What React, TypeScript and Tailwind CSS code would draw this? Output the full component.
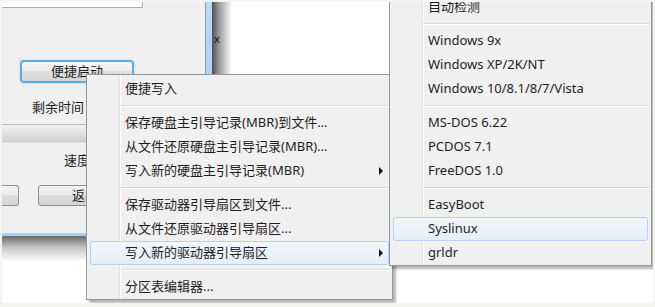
import React from 'react';

type Entry = { label?: string; sub?: boolean; hot?: boolean; sep?: boolean };

const bootMenu: Entry[] = [
  { label: '便捷写入' },
  { sep: true },
  { label: '保存硬盘主引导记录(MBR)到文件...' },
  { label: '从文件还原硬盘主引导记录(MBR)...' },
  { label: '写入新的硬盘主引导记录(MBR)', sub: true },
  { sep: true },
  { label: '保存驱动器引导扇区到文件...' },
  { label: '从文件还原驱动器引导扇区...' },
  { label: '写入新的驱动器引导扇区', sub: true, hot: true },
  { sep: true },
  { label: '分区表编辑器...' },
];

const sectorMenu: Entry[] = [
  { label: '自动检测' },
  { sep: true },
  { label: 'Windows 9x' },
  { label: 'Windows XP/2K/NT' },
  { label: 'Windows 10/8.1/8/7/Vista' },
  { sep: true },
  { label: 'MS-DOS 6.22' },
  { label: 'PCDOS 7.1' },
  { label: 'FreeDOS 1.0' },
  { sep: true },
  { label: 'EasyBoot' },
  { label: 'Syslinux', hot: true },
  { label: 'grldr' },
];

function Arrow() {
  return <span className="ml-auto h-0 w-0 border-y-[4px] border-l-[4px] border-y-transparent border-l-[#111]" />;
}

function PopupMenu({ entries, className }: { entries: Entry[]; className: string }) {
  return (
    <div
      className={`absolute flex flex-col border border-[#979797] bg-[#f0f0f0] bg-[linear-gradient(to_right,transparent_32px,#e2e3e3_32px,#e2e3e3_33px,#ffffff_33px,#ffffff_34px,transparent_34px)] pt-[2px] shadow-[3px_3px_2px_rgba(0,0,0,0.28)] ${className}`}
    >
      {entries.map((e, i) => {
        if (e.sep) {
          return (
            <div key={i} className="flex h-[10px] flex-col justify-center pl-[33px] pr-[2px]">
              <div className="h-px bg-[#dcdcdc]" />
              <div className="h-px bg-white" />
            </div>
          );
        }
        if (e.hot) {
          return (
            <div
              key={i}
              className="mx-[3px] flex h-[24px] items-center rounded-[3px] border border-[#b4d0f2] bg-[linear-gradient(#f4f8fd,#e4edf8)] pl-[34px] pr-[5px]"
            >
              <span>{e.label}</span>
              {e.sub && <Arrow />}
            </div>
          );
        }
        return (
          <div key={i} className="flex h-[24px] items-center pl-[38px] pr-[9px]">
            <span>{e.label}</span>
            {e.sub && <Arrow />}
          </div>
        );
      })}
    </div>
  );
}

export default function App() {
  return (
    <div className="h-[307px] w-[655px] bg-[#f4f4f0] pl-[2px] pt-[2px]">
      <div className="relative h-[301px] w-[651px] overflow-hidden bg-white font-['Noto_Sans','Noto_Sans_CJK_SC',sans-serif] text-[13px] text-[#1e1e1e]">
        {/* main dialog, left */}
        <div className="absolute left-[-2px] top-[-2px] flex w-[205px] flex-col">
          <div className="flex h-[233px] flex-col bg-[#f0f0f0]">
            <div className="ml-[2px] h-[8px] w-[141px] border-b border-r border-[#abadb3] bg-white" />
            <div className="ml-[20px] mt-[52px] flex h-[23px] w-[114px] items-center justify-center rounded-[4px] border-2 border-[#5aaee2] bg-[linear-gradient(#f6f6f6,#ececec_50%,#dedede_50%,#d6d6d6)] shadow-[0_0_2px_#8cc8ee]">
              便捷启动
            </div>
            <div className="ml-[32px] mt-[16px] h-[16px] leading-[16px]">剩余时间</div>
            <div className="mt-[9px] h-[19px] border-b border-t border-b-[#d8d8d8] border-t-[#b9b9b9] bg-[linear-gradient(#f2f2f2,#e2e2e2_45%,#cfcfcf)]" />
            <div className="ml-[64px] mt-[9px] h-[16px] leading-[16px]">速度</div>
            <div className="mt-[17px] flex h-[21px]">
              <div className="w-[19px] rounded-r-[3px] border border-l-0 border-[#8e8f8f] bg-[linear-gradient(#f2f2f2,#ebebeb_50%,#dddddd_50%,#d4d4d4)]" />
              <div className="ml-[19px] flex w-[120px] items-center rounded-[3px] border border-[#8e8f8f] bg-[linear-gradient(#f2f2f2,#ebebeb_50%,#dddddd_50%,#d4d4d4)] pl-[33px]">
                返回
              </div>
            </div>
          </div>
          <div className="h-[3px] bg-[#abd0f4]" />
          <div className="h-[26px] bg-[linear-gradient(#6a6a6a,#c8c8c8_45%,#ffffff)]" />
        </div>

        {/* window behind, top middle */}
        <div className="absolute left-[203px] top-[-2px] flex h-[235px] w-[185px] flex-col bg-[#f0f0f0]">
          <div className="flex h-[75px] border-b border-[#c9c9c9]">
            <div className="w-px bg-[#9a9a9a]" />
            <div className="w-[6px] bg-[linear-gradient(#bcd9f6,#b2d3f4)]" />
            <div className="w-[20px] bg-[linear-gradient(to_right,#4e4e4e,#9a9a9a_35%,#ffffff)] pl-[2px] pt-[33px] text-[11px] leading-[12px] text-[#111]">
              x
            </div>
            <div className="flex-1 bg-white" />
            <div className="w-px bg-[#a3a3a3]" />
          </div>
        </div>

        <PopupMenu entries={bootMenu} className="left-[84px] top-[72px] w-[307px]" />
        <PopupMenu entries={sectorMenu} className="left-[387px] top-[-10px] w-[263px]" />
      </div>
    </div>
  );
}
